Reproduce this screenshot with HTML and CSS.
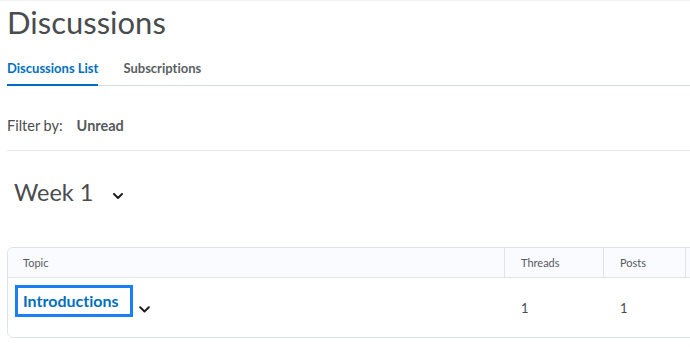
FILE: index.html
```html
<!DOCTYPE html>
<html lang="en">
<head>
<meta charset="utf-8">
<title>Discussions</title>
<link rel="stylesheet" href="styles.css">
</head>
<body>
<div class="page">
  <h1 class="title">Discussions</h1>
  <nav class="tabs">
    <a class="tab tab-active">Discussions List</a>
    <a class="tab">Subscriptions</a>
  </nav>
  <div class="filter">
    <span class="filter-label">Filter by:</span>
    <span class="filter-value">Unread</span>
  </div>
  <div class="week">
    <h2 class="week-title">Week 1</h2>
    <svg class="chev week-chev" width="10" height="6" viewBox="0 0 10 6"><path d="M1 1 L5 5 L9 1" fill="none" stroke="#202122" stroke-width="2" stroke-linecap="round" stroke-linejoin="round"/></svg>
  </div>
  <div class="table">
    <div class="row head">
      <div class="cell c-topic">Topic</div>
      <div class="cell c-threads">Threads</div>
      <div class="cell c-posts">Posts</div>
      <div class="cell c-more"></div>
    </div>
    <div class="row body">
      <div class="cell c-topic">
        <a class="topic-link">Introductions</a>
        <svg class="chev topic-chev" width="11" height="7" viewBox="0 0 11 7"><path d="M1.2 1.2 L5.5 5.5 L9.8 1.2" fill="none" stroke="#202122" stroke-width="2" stroke-linecap="round" stroke-linejoin="round"/></svg>
      </div>
      <div class="cell c-threads num">1</div>
      <div class="cell c-posts num">1</div>
      <div class="cell c-more"></div>
    </div>
  </div>
</div>
</body>
</html>
```
FILE: styles.css
```css
html, body {
  margin: 0;
  padding: 0;
  overflow: hidden;
  background: #ffffff;
}
body {
  font-family: Lato, "Noto Sans", sans-serif;
  font-variant-ligatures: none;
  color: #494c4e;
  border-top: 1px solid #f1f2f4;
}
.page {
  padding-left: 7px;
}
.title {
  margin: 0;
  padding-top: 3px;
  font-size: 31px;
  font-weight: 400;
  line-height: 36px;
  color: #494c4e;
}
.tabs {
  display: flex;
  margin-top: 18px;
  border-bottom: 1px solid #d5dce3;
}
.tab {
  font-size: 13px;
  font-weight: 700;
  line-height: 20px;
  padding-bottom: 6px;
  border-bottom: 2px solid transparent;
  margin-right: 25px;
  color: #5b5f62;
  margin-bottom: -1px;
}
.tab-active {
  color: #006fbf;
  border-bottom-color: #006fbf;
}
.filter {
  display: flex;
  align-items: baseline;
  gap: 14px;
  font-size: 14.5px;
  line-height: 20px;
  padding-top: 30px;
  padding-bottom: 14px;
  border-bottom: 1px solid #e6eaf0;
}
.filter-label {
  color: #494c4e;
}
.filter-value {
  font-weight: 700;
  color: #565a5c;
}
.week {
  display: flex;
  align-items: center;
  gap: 20px;
  padding-left: 7px;
  margin-top: 26px;
}
.week-title {
  margin: 0;
  font-size: 23.5px;
  font-weight: 400;
  line-height: 30px;
  color: #494c4e;
}
.week-chev {
  margin-top: 8px;
}
.table {
  margin-top: 40px;
  width: 760px;
  border: 1px solid #dfe4ea;
  border-radius: 6px;
  overflow: hidden;
}
.row {
  display: flex;
}
.head {
  height: 29px;
  background: #f9fbff;
  border-bottom: 1px solid #dfe4ea;
  font-size: 11px;
  color: #565a5c;
}
.head .cell {
  display: flex;
  align-items: center;
}
.body {
  height: 59px;
}
.cell {
  box-sizing: border-box;
}
.c-topic {
  width: 496px;
  padding-left: 15px;
}
.c-threads {
  width: 99px;
  padding-left: 16px;
  border-left: 1px solid #dfe4ea;
}
.c-posts {
  width: 82px;
  padding-left: 16px;
  border-left: 1px solid #dfe4ea;
}
.c-more {
  flex: 1;
  border-left: 1px solid #dfe4ea;
}
.body .c-topic {
  padding-left: 7px;
  padding-top: 7px;
  display: flex;
  align-items: flex-start;
}
.body .c-threads, .body .c-posts, .body .c-more {
  border-left-color: transparent;
}
.num {
  display: flex;
  align-items: center;
  font-size: 13px;
  color: #494c4e;
}
.topic-link {
  display: inline-block;
  border: 3px solid #1a7ff3;
  padding: 3px 11px 3px 5px;
  font-size: 16px;
  font-weight: 700;
  line-height: 20px;
  color: #006fbf;
}
.topic-link + .topic-chev {
  margin-left: 6px;
  margin-top: 21px;
}
```
